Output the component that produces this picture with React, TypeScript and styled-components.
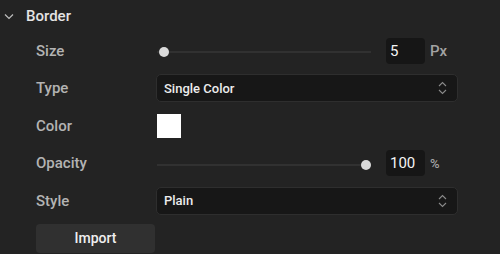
import { useState } from 'react';
import styled, { createGlobalStyle } from 'styled-components';

const GlobalStyle = createGlobalStyle`
  html, body { margin: 0; padding: 0; background: #232323; }
  body {
    font-family: Roboto, "Liberation Sans", sans-serif;
    -webkit-font-smoothing: antialiased;
  }
`;

const Panel = styled.div`
  width: 500px;
  height: 254px;
  background: #232323;
  overflow: hidden;
`;

const Header = styled.button`
  display: flex;
  align-items: center;
  gap: 12px;
  height: 32px;
  padding: 0 0 0 4px;
  background: none;
  border: none;
  color: #e4e4e4;
  font-family: inherit;
  font-size: 15px;
  font-weight: 500;
  cursor: pointer;
`;

const Rows = styled.div`
  display: grid;
  grid-template-columns: 120px 302px;
  grid-auto-rows: 37.5px;
  align-items: center;
  padding-left: 36px;
`;

const Label = styled.span`
  color: #b3b3b3;
  font-size: 15px;
  font-weight: 500;
`;

const SliderRow = styled.div`
  display: flex;
  align-items: center;
`;

const Track = styled.div`
  position: relative;
  width: 214px;
  height: 2px;
  margin: 3px 0 0 1px;
  background: #313131;
`;

const Thumb = styled.div`
  position: absolute;
  top: 50%;
  width: 10px;
  height: 10px;
  margin: -5px 0 0 -5px;
  border-radius: 50%;
  background: #dadada;
`;

const NumberBox = styled.div`
  display: flex;
  align-items: center;
  width: 39px;
  height: 26px;
  margin-left: 15px;
  padding-left: 4px;
  box-sizing: border-box;
  border-radius: 4px;
  background: #161616;
  color: #f4f4f4;
  font-size: 15px;
`;

const Unit = styled.span<{ $size: number }>`
  margin-left: 5px;
  color: #a3a3a3;
  font-size: ${p => p.$size}px;
  font-weight: 500;
`;

const Select = styled.div`
  display: flex;
  align-items: center;
  justify-content: space-between;
  height: 28px;
  padding: 0 10px 0 7px;
  box-sizing: border-box;
  border: 1px solid #2e2e2e;
  border-radius: 5px;
  background: #171717;
  color: #ececec;
  font-size: 13px;
  font-weight: 500;
`;

const Swatch = styled.div<{ $color: string }>`
  width: 24px;
  height: 24px;
  margin-left: 1px;
  background: ${p => p.$color};
`;

const Button = styled.button`
  height: 29px;
  width: 119px;
  border: none;
  border-radius: 4px;
  background: #303030;
  color: #efefef;
  font-family: inherit;
  font-size: 14px;
  font-weight: 500;
  cursor: pointer;
`;

const ChevronDown = () => (
  <svg width="10" height="7" viewBox="0 0 10 7" fill="none">
    <path d="M1 1.5 L5 5.5 L9 1.5" stroke="#bdbdbd" strokeWidth="1.2" />
  </svg>
);

const UpDown = () => (
  <svg width="9" height="14" viewBox="0 0 9 14" fill="none">
    <path d="M1 5 L4.5 1.5 L8 5" stroke="#8a8a8a" strokeWidth="1.1" />
    <path d="M1 9 L4.5 12.5 L8 9" stroke="#8a8a8a" strokeWidth="1.1" />
  </svg>
);

const TRACK = 214;

const Slider = ({ value, max, unit, unitSize }: { value: number; max: number; unit: string; unitSize: number }) => (
  <SliderRow>
    <Track>
      <Thumb style={{ left: 5 + (value / max) * (TRACK - 10) }} />
    </Track>
    <NumberBox>{value}</NumberBox>
    <Unit $size={unitSize}>{unit}</Unit>
  </SliderRow>
);

export default function App() {
  const [open, setOpen] = useState(true);

  return (
    <Panel>
      <GlobalStyle />
      <Header onClick={() => setOpen(!open)}>
        <ChevronDown />
        Border
      </Header>
      {open && (
        <Rows>
          <Label>Size</Label>
          <Slider value={5} max={500} unit="Px" unitSize={15} />

          <Label>Type</Label>
          <Select>
            <span>Single Color</span>
            <UpDown />
          </Select>

          <Label>Color</Label>
          <Swatch $color="#ffffff" />

          <Label>Opacity</Label>
          <Slider value={100} max={100} unit="%" unitSize={13} />

          <Label>Style</Label>
          <Select>
            <span>Plain</span>
            <UpDown />
          </Select>

          <Button>Import</Button>
        </Rows>
      )}
    </Panel>
  );
}
